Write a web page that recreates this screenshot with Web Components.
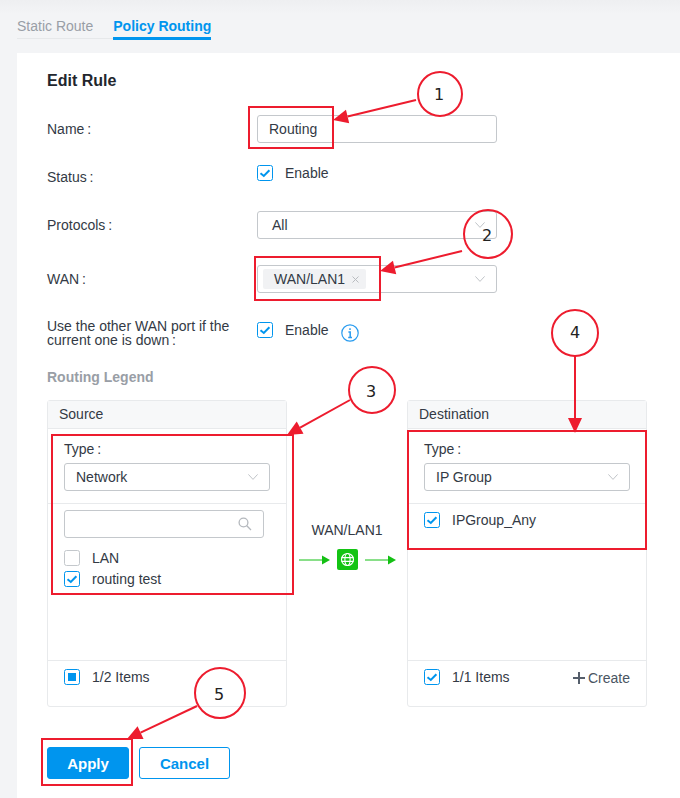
<!DOCTYPE html>
<html>
<head>
<meta charset="utf-8">
<title>Policy Routing</title>
<style>
  html,body{
    margin:0;
    padding:0;
  }
  body{
    width:680px;
    height:798px;
    overflow:hidden;
    position:relative;
    background:#f3f4f6;
    color:#333a45;
    font-family:"Liberation Sans",Arial,sans-serif;
    font-size:14px;
  }
  .name-row{margin-top:25px;}
  .status-row{margin-top:20px;--top-pad:2px;}
  .protocols-row{margin-top:20px;}
  .wan-row{margin-top:26px;}
  .fallback-row{margin-top:26px;}
</style>
</head>
<body>

<route-tabs></route-tabs>

<rule-card>
  <form-row class="name-row" label="Name"><text-box value="Routing"></text-box></form-row>
  <form-row class="status-row" label="Status" top><tick-box state="on">Enable</tick-box></form-row>
  <form-row class="protocols-row" label="Protocols"><drop-box value="All"></drop-box></form-row>
  <form-row class="wan-row" label="WAN"><drop-box tag="WAN/LAN1"></drop-box></form-row>
  <form-row class="fallback-row" label="Use the other WAN port if the current one is down" top>
    <tick-box state="on" info>Enable</tick-box>
  </form-row>
  <routing-legend></routing-legend>
  <rule-actions></rule-actions>
</rule-card>

<rule-marks></rule-marks>

<script>
const CHECK_PATH = 'M3.5 8.2 L6.8 11 L12.4 5.2';

class RouteTabs extends HTMLElement {
  constructor() {
    super();
    this.attachShadow({ mode: 'open' }).innerHTML = `
    <style>
      :host{
        display:flex;
        height:53px;
        box-sizing:border-box;
        padding:18px 0 0 17px;
        background:linear-gradient(#eeeff1,#f3f4f6 14px);
        line-height:17px;
      }
      .tab{
        height:20px;
        border-bottom:1px solid #e6e8ea;
        color:#999ea6;
        padding-right:20px;
      }
      .active{
        height:19px;
        border-bottom:3px solid #0095ee;
        color:#0095ee;
        font-weight:bold;
        padding:0;
        margin-left:0;
      }
    </style>
    <div class="tab">Static Route</div>
    <div class="tab active">Policy Routing</div>`;
  }
}

class RuleCard extends HTMLElement {
  constructor() {
    super();
    this.attachShadow({ mode: 'open' }).innerHTML = `
    <style>
      :host{
        display:block;
        margin-left:17px;
        height:745px;
        box-sizing:border-box;
        padding:18px 33px 0 30px;
        background:#fff;
      }
      h2{
        margin:0;
        font-size:16px;
        line-height:19px;
        font-weight:bold;
        color:#22262d;
      }
    </style>
    <h2>Edit Rule</h2>
    <slot></slot>`;
  }
}

class FormRow extends HTMLElement {
  constructor() {
    super();
    this.attachShadow({ mode: 'open' }).innerHTML = `
    <style>
      :host{
        display:grid;
        grid-template-columns:210px 240px;
        align-items:center;
        min-height:28px;
        line-height:14px;
      }
      :host([top]) slot{
        display:block;
        align-self:start;
        padding-top:var(--top-pad,3px);
      }
      .label{
        width:190px;
      }
    </style>
    <div class="label">${this.getAttribute('label')}&thinsp;:</div>
    <slot></slot>`;
  }
}

class TextBox extends HTMLElement {
  constructor() {
    super();
    this.attachShadow({ mode: 'open' }).innerHTML = `
    <style>
      :host{
        display:flex;
        align-items:center;
        height:28px;
        box-sizing:border-box;
        padding:0 11px;
        border:1px solid #c4c8cc;
        border-radius:3px;
      }
    </style>
    ${this.getAttribute('value')}`;
  }
}

class DropBox extends HTMLElement {
  constructor() {
    super();
    const tag = this.getAttribute('tag');
    const inner = tag
      ? `<span class="tag">${tag}<svg width="7" height="7" viewBox="0 0 7 7"><path d="M.5 .5 6.5 6.5M6.5 .5 .5 6.5" stroke="#b9bcc0" fill="none"/></svg></span>`
      : `<span class="value">${this.getAttribute('value')}</span>`;
    this.attachShadow({ mode: 'open' }).innerHTML = `
    <style>
      :host{
        display:flex;
        align-items:center;
        justify-content:space-between;
        height:28px;
        box-sizing:border-box;
        padding:0 11px 0 5px;
        border:1px solid #c4c8cc;
        border-radius:3px;
      }
      .value{
        padding-left:var(--value-pad,9px);
      }
      .tag{
        display:flex;
        align-items:center;
        gap:7px;
        height:20px;
        padding:0 7px 0 11px;
        background:#f1f2f4;
        border-radius:2px;
      }
    </style>
    ${inner}
    <svg width="10" height="6" viewBox="0 0 10 6"><path d="M.4 .4 5 5.4 9.6 .4" stroke="#c0c4c8" fill="none"/></svg>`;
  }
}

class SearchBox extends HTMLElement {
  constructor() {
    super();
    this.attachShadow({ mode: 'open' }).innerHTML = `
    <style>
      :host{
        display:flex;
        align-items:center;
        justify-content:flex-end;
        width:200px;
        height:28px;
        box-sizing:border-box;
        padding:0 11px 0 0;
        border:1px solid #c4c8cc;
        border-radius:3px;
      }
    </style>
    <svg width="14" height="14" viewBox="0 0 14 14" fill="none" stroke="#b4b8bd" stroke-width="1.3"><circle cx="5.5" cy="5.5" r="4.4"/><path d="M8.8 8.8 13 13"/></svg>`;
  }
}

class TickBox extends HTMLElement {
  constructor() {
    super();
    const state = this.getAttribute('state');
    let mark = '';
    if (state == 'on') mark = `<path d="${CHECK_PATH}" stroke="#0095ee" stroke-width="2" fill="none"/>`;
    if (state == 'part') mark = `<rect x="4" y="4" width="8" height="8" fill="#0095ee"/>`;
    const stroke = state == 'off' ? '#c4c8cc' : '#0095ee';
    const info = this.hasAttribute('info')
      ? `<svg class="info" width="18" height="18" viewBox="0 0 18 18"><circle cx="9" cy="9" r="8.2" fill="none" stroke="#2a9cef" stroke-width="1.2"/><path d="M9 4.2V6M7.4 8H9.2V13.2M7.2 13.4H11" stroke="#2a9cef" stroke-width="1.5" fill="none"/></svg>`
      : '';
    this.attachShadow({ mode: 'open' }).innerHTML = `
    <style>
      :host{
        display:flex;
        align-items:center;
        gap:12px;
        height:16px;
        line-height:16px;
      }
      svg{
        flex:none;
      }
      .info{
        margin:6px 0 0 0;
      }
    </style>
    <svg width="16" height="16" viewBox="0 0 16 16"><rect x=".5" y=".5" width="15" height="15" rx="2" fill="#fff" stroke="${stroke}"/>${mark}</svg>
    <slot></slot>${info}`;
  }
}

class RoutingLegend extends HTMLElement {
  constructor() {
    super();
    this.attachShadow({ mode: 'open' }).innerHTML = `
    <style>
      :host{
        display:block;
        margin-top:22px;
      }
      h3{
        margin:0 0 15px;
        font-size:14px;
        line-height:16px;
        font-weight:bold;
        color:#999ea6;
      }
      .columns{
        display:flex;
        justify-content:space-between;
      }
      tick-box{
        margin-top:5px;
      }
    </style>
    <h3>Routing Legend</h3>
    <div class="columns">
      <transfer-panel title="Source" type="Network" count="1/2 Items" state="part">
        <search-box></search-box>
        <tick-box state="off" style="margin-top:12px">LAN</tick-box>
        <tick-box state="on">routing test</tick-box>
      </transfer-panel>
      <route-link>WAN/LAN1</route-link>
      <transfer-panel title="Destination" type="IP Group" count="1/1 Items" state="on" create>
        <tick-box state="on" style="margin-top:2px">IPGroup_Any</tick-box>
      </transfer-panel>
    </div>`;
  }
}

class TransferPanel extends HTMLElement {
  constructor() {
    super();
    const create = this.hasAttribute('create')
      ? `<span class="create"><svg width="12" height="12" viewBox="0 0 12 12"><path d="M6 0V12M0 6H12" stroke="#555e6b" stroke-width="2"/></svg>Create</span>`
      : '';
    this.attachShadow({ mode: 'open' }).innerHTML = `
    <style>
      :host{
        display:flex;
        flex-direction:column;
        width:240px;
        height:307px;
        box-sizing:border-box;
        border:1px solid #e8eaec;
        border-radius:3px;
      }
      .head{
        height:27px;
        line-height:26px;
        padding-left:11px;
        background:#f7f8f9;
        border-bottom:1px solid #e8eaec;
      }
      .type{
        height:75px;
        box-sizing:border-box;
        padding:13px 16px 0;
        border-bottom:1px solid #e8eaec;
        line-height:14px;
      }
      .type drop-box{
        width:206px;
        margin-top:7px;
        --value-pad:6px;
      }
      .list{
        flex:1;
        padding:6px 16px 0;
      }
      .foot{
        display:flex;
        justify-content:space-between;
        align-items:flex-start;
        height:46px;
        box-sizing:border-box;
        padding:8px 16px 0;
        border-top:1px solid #e8eaec;
      }
      .create{
        display:flex;
        align-items:center;
        gap:3px;
        color:#4a5562;
        height:18px;
        margin-top:0;
      }
    </style>
    <div class="head">${this.getAttribute('title')}</div>
    <div class="type">
      Type&thinsp;:
      <drop-box value="${this.getAttribute('type')}"></drop-box>
    </div>
    <div class="list"><slot></slot></div>
    <div class="foot">
      <tick-box state="${this.getAttribute('state')}">${this.getAttribute('count')}</tick-box>
      ${create}
    </div>`;
  }
}

class RouteLink extends HTMLElement {
  constructor() {
    super();
    this.attachShadow({ mode: 'open' }).innerHTML = `
    <style>
      :host{
        display:flex;
        flex-direction:column;
        align-items:center;
        width:120px;
        padding-top:122px;
        line-height:16px;
      }
      .flow{
        display:flex;
        align-items:center;
        gap:7px;
        margin-top:11px;
      }
    </style>
    <slot></slot>
    <div class="flow">
      <svg width="31" height="10" viewBox="0 0 31 10"><path d="M0 5H24" stroke="#14c014"/><path d="M23 .5 31 5 23 9.5Z" fill="#14c014"/></svg>
      <svg width="21" height="21" viewBox="0 0 21 21"><rect width="21" height="21" rx="2" fill="#14c414"/><g fill="none" stroke="#fff" stroke-width="1.1"><circle cx="10.5" cy="10.5" r="6"/><ellipse cx="10.5" cy="10.5" rx="2.6" ry="6"/><path d="M4.5 8.6H16.5M4.5 12.4H16.5"/></g></svg>
      <svg width="31" height="10" viewBox="0 0 31 10"><path d="M0 5H24" stroke="#14c014"/><path d="M23 .5 31 5 23 9.5Z" fill="#14c014"/></svg>
    </div>`;
  }
}

class RuleActions extends HTMLElement {
  constructor() {
    super();
    this.attachShadow({ mode: 'open' }).innerHTML = `
    <style>
      :host{
        display:flex;
        gap:10px;
        margin-top:40px;
      }
      button{
        height:32px;
        padding:0;
        border:1px solid #0095ee;
        border-radius:3px;
        background:#fff;
        color:#0095ee;
        font:bold 15px "Liberation Sans",Arial,sans-serif;
      }
      .apply{
        width:82px;
        background:#0095ee;
        color:#fff;
      }
      .cancel{
        width:91px;
      }
    </style>
    <button class="apply">Apply</button>
    <button class="cancel">Cancel</button>`;
  }
}

// the red callouts drawn on top of the screenshot
class RuleMarks extends HTMLElement {
  constructor() {
    super();
    const boxes = [[249,107,84,41],[255,257,125,43],[52,435,241,159],[408,431,238,118],[42,739,90,46]];
    // cx, cy, r, digit, digit x, digit baseline
    const rings = [[440,94,22,'1',439,100],[488,234,24,'2',487,241],[372,390,23,'3',371,397],[575,333,23,'4',575,338],[220,693,25,'5',219,700]];
    const arrows = [[416,100,333,120],[462,251,380,271],[350,400,287,435],[575,356,575,433],[197,706,127,739]];
    let svg = '';
    boxes.forEach(b => {
      svg += `<rect x="${b[0]}" y="${b[1]}" width="${b[2]}" height="${b[3]}" fill="none" stroke="#ed1c2e" stroke-width="2"/>`;
    });
    arrows.forEach(a => {
      const len = Math.hypot(a[2]-a[0], a[3]-a[1]);
      const ux = (a[2]-a[0])/len, uy = (a[3]-a[1])/len;
      const bx = a[2]-ux*15, by = a[3]-uy*15;
      const p1 = (bx-uy*7)+','+(by+ux*7), p2 = (bx+uy*7)+','+(by-ux*7);
      svg += `<path d="M${a[0]} ${a[1]}L${bx} ${by}" stroke="#ed1c2e" stroke-width="2"/>`;
      svg += `<polygon points="${a[2]},${a[3]} ${p1} ${p2}" fill="#ed1c2e"/>`;
    });
    rings.forEach(r => {
      svg += `<circle cx="${r[0]}" cy="${r[1]}" r="${r[2]}" fill="none" stroke="#ed1c2e" stroke-width="2"/>`;
      svg += `<text x="${r[4]}" y="${r[5]}" text-anchor="middle">${r[3]}</text>`;
    });
    this.attachShadow({ mode: 'open' }).innerHTML = `
    <style>
      :host{
        display:block;
        position:absolute;
        left:0;
        top:0;
        width:680px;
        height:798px;
        pointer-events:none;
      }
      text{
        font:16px "DejaVu Sans",sans-serif;
        fill:#222;
      }
    </style>
    <svg width="680" height="798" viewBox="0 0 680 798">${svg}</svg>`;
  }
}

customElements.define('route-tabs', RouteTabs);
customElements.define('rule-card', RuleCard);
customElements.define('form-row', FormRow);
customElements.define('text-box', TextBox);
customElements.define('drop-box', DropBox);
customElements.define('search-box', SearchBox);
customElements.define('tick-box', TickBox);
customElements.define('routing-legend', RoutingLegend);
customElements.define('transfer-panel', TransferPanel);
customElements.define('route-link', RouteLink);
customElements.define('rule-actions', RuleActions);
customElements.define('rule-marks', RuleMarks);
</script>
</body>
</html>
